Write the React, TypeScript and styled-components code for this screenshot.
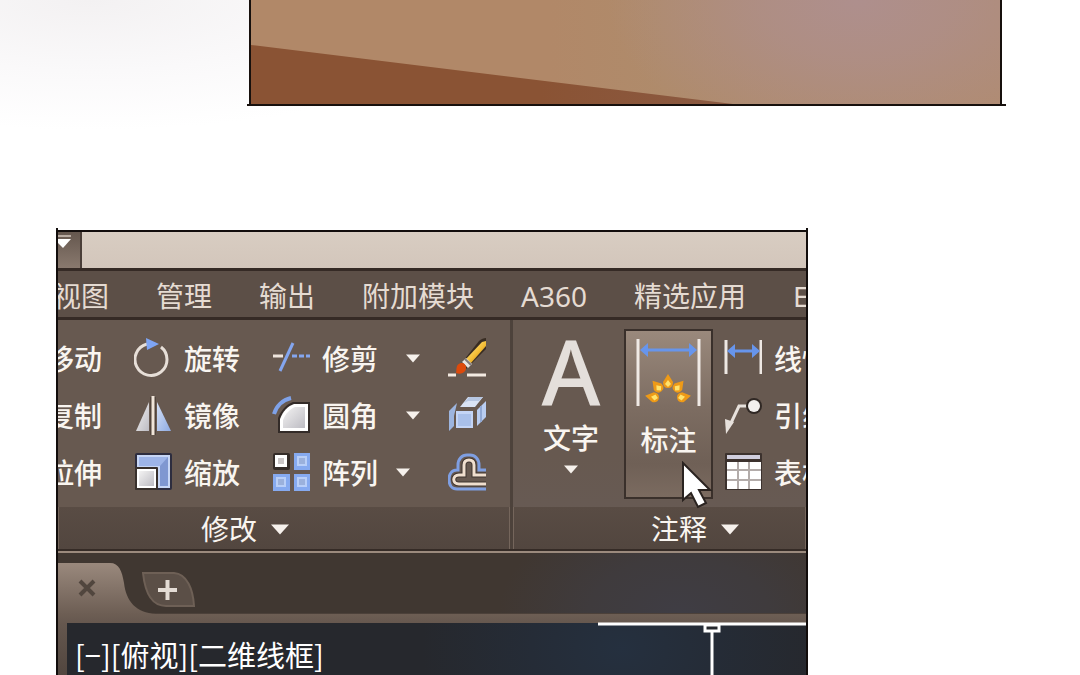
import React from "react";
import styled, { createGlobalStyle } from "styled-components";

const GlobalStyle = createGlobalStyle`
  * { box-sizing: border-box; }
  body { margin: 0; background: #fff; }
  button { margin: 0; padding: 0; border: 0; background: none; color: inherit; font: inherit; }
  svg { display: block; flex: none; }
`;

const Page = styled.main`
  display: flex;
  flex-direction: column;
  height: 100vh;
  overflow: hidden;
  color: #f9f5f0;
  font-family: "Noto Sans", "Noto Sans CJK SC", sans-serif;
  font-size: 28px;
  line-height: 42px;
  background: radial-gradient(ellipse 420px 130px at 90px 0, #f3f1f2, #faf9fa 55%, #fff) no-repeat;
`;

const TopRow = styled.div`
  display: grid;
  grid-template-columns: 249fr 753fr 78fr;
`;

const Illustration = styled.section`
  position: relative;
  grid-column: 2;
  height: 106px;
  border: solid #17100d;
  border-width: 0 2px 2px;
  background:
    radial-gradient(ellipse 250px 150px at 81% 0, #ae8f8d, rgba(174, 143, 141, 0.7) 40%, rgba(174, 142, 142, 0)),
    linear-gradient(90deg, #b18868 40%, #af8b6b 55%, #b08b70);

  &::after {
    content: "";
    position: absolute;
    left: -4px;
    right: -6px;
    bottom: -2px;
    height: 2px;
    background: #17100d;
  }

  svg { width: 100%; height: 100%; }
`;

const BottomRow = styled.div`
  display: grid;
  flex: 1;
  grid-template-columns: 56fr 752fr 272fr;
  min-height: 0;
  padding-top: 124px;
`;

const Window = styled.section`
  position: relative;
  grid-column: 2;
  display: flex;
  flex-direction: column;
  min-width: 0;
  border: solid #120d0c;
  border-width: 2px 2px 0;

  &::before, &::after {
    content: "";
    position: absolute;
    top: -4px;
    width: 2px;
    height: 4px;
    background: #120d0c;
  }
  &::before { left: -2px; }
  &::after { right: -2px; }
`;

const Clip = styled.div`
  display: flex;
  flex: 1;
  flex-direction: column;
  min-height: 0;
  overflow: hidden;
  background: #675950;
`;

const TitleBar = styled.header`
  display: flex;
  flex: none;
  height: 39px;
  border-bottom: 3px solid #352a25;
  background: linear-gradient(#d8cdc2, #d3c6bb);
`;

const QuickMenu = styled.button`
  display: flex;
  width: 24px;
  padding-top: 2px;
  border-right: 2px solid #4a3e38;
  background: linear-gradient(#65574e, #89796e);
`;

const TabBar = styled.nav`
  display: flex;
  flex: none;
  gap: 47px;
  height: 49px;
  padding-top: 4px;
  border-bottom: 3px solid #352a25;
  background: #5c4f47;
  color: #e5dbd2;
`;

const Tab = styled.button`
  flex: none;
  height: 42px;
  white-space: nowrap;
  &:first-child { margin-left: -5px; }
`;

const Ribbon = styled.div`
  display: flex;
  flex: none;
  height: 231px;
  border-bottom: 2px solid #352b26;
`;

const Panel = styled.section<{ $grow?: boolean }>`
  display: flex;
  flex-direction: column;
  flex: ${(p) => (p.$grow ? "1" : "0 0 455px")};
  min-width: 0;
  border-right: ${(p) => (p.$grow ? "0" : "3px solid #4d423b")};
  background: ${(p) => (p.$grow ? "linear-gradient(#675950 60%, #675b56)" : "#675950")};
`;

const PanelTitle = styled.button<{ $before?: number; $after?: number }>`
  display: flex;
  align-items: center;
  justify-content: center;
  gap: 14px;
  height: 42px;
  padding-top: 2px;
  padding-left: ${(p) => p.$before ?? 0}px;
  padding-right: ${(p) => p.$after ?? 0}px;
  border-right: 1px solid #75665c;
  border-left: 1px solid #75665c;
  background: linear-gradient(#594c44, #52463f);
`;

const ToolGrid = styled.div`
  display: grid;
  grid-template-columns: 44px 106px 144px 40px;
  grid-auto-rows: 57px;
  column-gap: 32px;
  height: 187px;
  padding-top: 10px;
  font-weight: 500;
`;

const Cell = styled.div<{ $gap?: number; $end?: boolean }>`
  display: flex;
  align-items: center;
  justify-content: ${(p) => (p.$end ? "flex-end" : "flex-start")};
  gap: ${(p) => p.$gap ?? 0}px;
`;

const Tool = styled.button`
  display: flex;
  flex: none;
  align-items: center;
  gap: 12px;
  white-space: nowrap;
`;

const AnnotateBody = styled.div`
  display: flex;
  height: 187px;
  padding-left: 29px;
  font-weight: 500;
`;

const TextTool = styled.button`
  display: flex;
  flex: none;
  flex-direction: column;
  align-items: center;
  gap: 6px;
  width: 58px;
  height: 170px;
  margin: 9px 24px 0 0;
  padding-top: 8px;
`;

const BigLetter = styled.span`
  height: 74px;
  color: #e4dfdb;
  font: 500 90px/68px "Noto Sans", sans-serif;
`;

const DimensionTool = styled(TextTool)`
  position: relative;
  width: 89px;
  margin-right: 11px;
  border: 2px solid #3a302b;
  background: linear-gradient(#9a897c, #7d6d62 45%, #6f6056 80%, #7b6b60);
`;

const Pointer = styled.svg`
  position: absolute;
  top: 130px;
  left: 55px;
`;

const ToolColumn = styled.div`
  display: grid;
  grid-auto-rows: 57px;
  padding-top: 10px;
`;

const DocTabs = styled.div`
  display: flex;
  flex: none;
  height: 63px;
  padding-top: 10px;
  border-top: 2px solid #9b8a7d;
  border-bottom: 1px solid #4c413a;
  background: radial-gradient(ellipse 180px 110px at 83% 100%, #3f3d44, #3f3b3d 50%, rgba(64, 55, 49, 0)), #403731;
`;

const DocTab = styled.button`
  width: 84px;
  height: 50px;
`;

const NewTab = styled.button`
  height: 36px;
  margin-top: 9px;
`;

const Workspace = styled.div`
  flex: 1;
  padding: 9px 0 0 9px;
  background: linear-gradient(#6d5e54, #65574e 10px, #51463f);
`;

const Drawing = styled.div`
  position: relative;
  height: 100%;
  padding: 10px 8px 0;
  background: radial-gradient(ellipse 200px 150px at 75% 50%, #25303f, #252c37 45%, rgba(38, 40, 45, 0)), #26282d;
  color: #fff;
  font-family: "Noto Sans CJK SC", sans-serif;
  font-size: 29px;
  white-space: nowrap;
`;

const Crosshair = styled.svg`
  position: absolute;
  top: -1px;
  right: 0;
`;

const Arrow = ({ size = 14 }: { size?: number }) => (
  <svg width={size} height={size === 14 ? 9 : 11} viewBox="0 0 14 9" preserveAspectRatio="none" aria-hidden>
    <path d="M0 .5h14L7 8.5z" fill="#f6f1ec" />
  </svg>
);

const Icon = ({ children }: { children: React.ReactNode }) => (
  <svg width="38" height="42" viewBox="0 0 38 42" aria-hidden>
    <defs>
      <linearGradient id="blue" x1="0" y1="0" x2="1" y2="1">
        <stop stopColor="#d4e0f6" /><stop offset="1" stopColor="#8eaae2" />
      </linearGradient>
      <linearGradient id="grey" x1="0" y1="0" x2="1" y2="1">
        <stop stopColor="#f4f3f3" /><stop offset="1" stopColor="#bdbcc3" />
      </linearGradient>
      <linearGradient id="gold" x1="0" y1="0" x2="1" y2="1">
        <stop stopColor="#fff3a5" /><stop offset=".55" stopColor="#f4bd35" /><stop offset="1" stopColor="#a36009" />
      </linearGradient>
    </defs>
    {children}
  </svg>
);

const RotateIcon = () => (
  <Icon>
    <path d="M27 9A16 16 0 1 1 13 6" fill="none" stroke="#e7dfd8" strokeWidth="3" />
    <path d="M12 0l13 6-12 6z" fill="#7ea5f5" />
  </Icon>
);
const MirrorIcon = () => (
  <Icon>
    <path d="M15 7v29H2z" fill="url(#grey)" />
    <path d="M23 7v29h14z" fill="url(#blue)" />
    <path d="M19 2v38" stroke="#51443c" strokeWidth="6" />
    <path d="M19 1v39" stroke="#efe4d9" strokeWidth="3" />
  </Icon>
);
const ScaleIcon = () => (
  <Icon>
    <rect x="1" y="1" width="37" height="37" rx="2" fill="#2d2d3f" />
    <rect x="3" y="3" width="33" height="33" fill="#c7d6f5" />
    <path d="M5 5h29v29h-8V14H5z" fill="#7f97d1" />
    <path d="M5 5h29l-8 9H5z" fill="#9db4e8" />
    <rect x="1" y="15" width="23" height="23" rx="1" fill="#38302c" />
    <rect x="3" y="17" width="19" height="19" fill="#fff" />
    <rect x="5" y="19" width="15" height="15" fill="url(#grey)" />
  </Icon>
);
const TrimIcon = () => (
  <Icon>
    <path d="M1 18h10" stroke="#eee5dd" strokeWidth="3" />
    <path d="M8 33L21 5" stroke="#84a6ef" strokeWidth="3" />
    <path d="M20 18h19" stroke="#84a6ef" strokeWidth="3" strokeDasharray="5 2" />
  </Icon>
);
const FilletIcon = () => (
  <Icon>
    <path d="M2 19A23 23 0 0 1 19 3" fill="none" stroke="#7fa2e8" strokeWidth="4" />
    <path d="M6 38V23C9 15 15 9 21 7h17v31z" fill="#332b28" />
    <path d="M8 36V24c3-8 8-13 14-15h14v27z" fill="#fff" />
    <path d="M11 33v-8c3-7 7-11 12-13h10v21z" fill="url(#grey)" />
  </Icon>
);
const ArrayIcon = () => (
  <Icon>
    <rect x="1" y="1" width="17" height="17" rx="2" fill="#342c28" />
    <rect x="3" y="3" width="12" height="12" fill="#fff" />
    <rect x="6" y="6" width="6" height="6" fill="#ccc8c8" />
    {[[22, 1], [1, 22], [22, 22]].map(([x, y]) => (
      <g key={`${x}-${y}`}>
        <rect x={x} y={y} width="17" height="17" fill="#86aaf0" />
        <rect x={x + 3} y={y + 3} width="10" height="10" fill="#b9cff8" />
        <rect x={x + 5} y={y + 5} width="6" height="6" fill="#9bb1dc" />
      </g>
    ))}
  </Icon>
);
const BrushIcon = () => (
  <Icon>
    <path d="M12 27L31 3c2-2 5-3 7-3v11L18 31z" fill="#382c22" />
    <path d="M18 21L34 4l4-1v5L23 25z" fill="url(#gold)" />
    <path d="M14 24l4-4 6 6-4 4z" fill="#e7e4e1" />
    <path d="M17 21l6 6" stroke="#817977" strokeWidth="2" />
    <path d="M8 35c1-2-1-9 5-10 5-1 7 6 3 9-2 2-5 2-8 1z" fill="#dd4a0c" />
    <path d="M0 37h8M19 37h19" stroke="#f3eae1" strokeWidth="3" />
  </Icon>
);
const ExplodeIcon = () => (
  <Icon>
    <path d="M1 16l8-8-3 13v10l-5 5z" fill="#9db5df" />
    <path d="M12 12L20 2h15l-8 10z" fill="#dae4f5" />
    <path d="M16 8l5-6h14l-4 4H20z" fill="#b7c7e2" />
    <path d="M29 15l9-9v16l-9 9z" fill="#b9cdf1" />
    <path d="M33 11v16" stroke="#91a9d5" strokeWidth="2" />
    <rect x="8" y="16" width="17" height="17" fill="#c4d5f6" />
    <rect x="10" y="19" width="13" height="12" fill="#a9c0ea" />
  </Icon>
);
const OffsetIcon = () => (
  <Icon>
    <path d="M38 18h-7v-5c0-6-4-10-9-10h-3c-5 0-9 4-9 10v5H9c-5 0-8 4-8 9.500S4 37 9 37h29" fill="none" stroke="#7f9fe2" strokeWidth="3" />
    <path d="M38 23H26V13c0-4-2-5-5-5s-5 1-5 5v10h-5c-7 0-7 9 0 9h27" fill="none" stroke="#3f342f" strokeWidth="5" />
    <path d="M38 23H26V13c0-4-2-5-5-5s-5 1-5 5v10h-5c-7 0-7 9 0 9h27" fill="none" stroke="#f0dfcf" strokeWidth="3" />
  </Icon>
);
const LinearIcon = () => (
  <Icon>
    <path d="M2 2v34M37 2v34" stroke="#eee8e3" strokeWidth="3" />
    <path d="M8 13h24" stroke="#6795ec" strokeWidth="3" />
    <path d="M3 13l8-7v14zM36 13l-8-7v14z" fill="#6795ec" />
  </Icon>
);
const LeaderIcon = () => (
  <Icon>
    <path d="M28 11H15L7 28" fill="none" stroke="#e7e1dc" strokeWidth="3" />
    <path d="M1 24l9 3-8 12z" fill="#e7e1dc" />
    <circle cx="30" cy="11" r="8" fill="#302824" />
    <circle cx="30" cy="11" r="6" fill="#f2efed" />
  </Icon>
);
const TableIcon = () => (
  <Icon>
    <rect x="1" y="1" width="37" height="37" rx="1" fill="#3c322e" />
    <rect x="3" y="3" width="33" height="4" fill="#d0cede" />
    <rect x="3" y="10" width="34" height="27" fill="#fff" />
    <path d="M14 10v27M25 10v27M3 18h34M3 28h34" stroke="#b3acaa" strokeWidth="2" />
  </Icon>
);

const DimensionIcon = () => (
  <svg width="65" height="74" viewBox="0 0 65 74" aria-hidden>
    <path d="M2 0v67M63 0v67" stroke="#f0eae5" strokeWidth="3" />
    <path d="M8 11h48" stroke="#6795ec" strokeWidth="3" />
    <path d="M4 11l8-7v14zM61 11l-8-7v14z" fill="#6795ec" />
    {[[16, 58, -80], [21, 47, -40], [32, 42, 0], [43, 47, 40], [48, 58, 80]].map(([x, y, angle]) => (
      <g key={x} transform={`translate(${x} ${y}) rotate(${angle})`}>
        <path d="M0-7L5 1Q5 7 0 7Q-5 7-5 1z" fill="#ee9a17" />
        <path d="M0-1L3 3 0 6-3 3z" fill="#ffe36d" />
      </g>
    ))}
  </svg>
);

const rows = [
  { left: "移动", mid: "旋转", midIcon: <RotateIcon />, right: "修剪", rightIcon: <TrimIcon />, gap: 28, extra: "删除", extraIcon: <BrushIcon /> },
  { left: "复制", mid: "镜像", midIcon: <MirrorIcon />, right: "圆角", rightIcon: <FilletIcon />, gap: 28, extra: "分解", extraIcon: <ExplodeIcon /> },
  { left: "拉伸", mid: "缩放", midIcon: <ScaleIcon />, right: "阵列", rightIcon: <ArrayIcon />, gap: 18, extra: "偏移", extraIcon: <OffsetIcon /> },
];

export default function App() {
  return (
    <Page>
      <GlobalStyle />
      <TopRow>
        <Illustration>
          <svg viewBox="0 0 749 104" preserveAspectRatio="none" aria-hidden>
            <defs>
              <linearGradient id="floor">
                <stop offset=".6" stopColor="#8a5334" /><stop offset="1" stopColor="#8b5a42" />
              </linearGradient>
            </defs>
            <path d="M0 45L482 104H0z" fill="url(#floor)" />
          </svg>
        </Illustration>
      </TopRow>
      <BottomRow>
        <Window>
          <Clip>
            <TitleBar>
              <QuickMenu aria-label="快速访问">
                <svg width="22" height="30" viewBox="0 0 22 30" aria-hidden>
                  <path d="M0 2h13" stroke="#b9aca2" strokeWidth="2" />
                  <path d="M0 5h13L5 14 0 9z" fill="#fff" />
                </svg>
              </QuickMenu>
            </TitleBar>
            <TabBar>
              {["视图", "管理", "输出", "附加模块", "A360", "精选应用", "E"].map((t) => <Tab key={t}>{t}</Tab>)}
            </TabBar>
            <Ribbon>
              <Panel>
                <ToolGrid>
                  {rows.map((r) => (
                    <React.Fragment key={r.left}>
                      <Cell $end><Tool>{r.left}</Tool></Cell>
                      <Cell><Tool>{r.midIcon}{r.mid}</Tool></Cell>
                      <Cell $gap={r.gap}>
                        <Tool>{r.rightIcon}{r.right}</Tool>
                        <Tool aria-label={`${r.right}选项`}><Arrow /></Tool>
                      </Cell>
                      <Cell><Tool aria-label={r.extra}>{r.extraIcon}</Tool></Cell>
                    </React.Fragment>
                  ))}
                </ToolGrid>
                <PanelTitle $after={78}>修改<Arrow size={18} /></PanelTitle>
              </Panel>
              <Panel $grow>
                <AnnotateBody>
                  <TextTool>
                    <BigLetter aria-hidden>A</BigLetter>
                    <span>文字</span>
                    <Arrow />
                  </TextTool>
                  <DimensionTool>
                    <DimensionIcon />
                    <span>标注</span>
                    <Pointer width="32" height="50" viewBox="0 0 32 50" aria-hidden>
                      <path d="M2 2v37l8-7 7 14 8-4-7-13h11z" fill="#fff" stroke="#2a2320" strokeWidth="2" />
                    </Pointer>
                  </DimensionTool>
                  <ToolColumn>
                    <Tool><LinearIcon />线性</Tool>
                    <Tool><LeaderIcon />引线</Tool>
                    <Tool><TableIcon />表格</Tool>
                  </ToolColumn>
                </AnnotateBody>
                <PanelTitle $before={71}>注释<Arrow size={18} /></PanelTitle>
              </Panel>
            </Ribbon>
            <DocTabs>
              <DocTab aria-label="关闭">
                <svg width="100" height="51" viewBox="0 0 100 51" aria-hidden>
                  <defs>
                    <linearGradient id="tab" x2="0" y2="1">
                      <stop stopColor="#9a897d" /><stop offset="1" stopColor="#6d5e54" />
                    </linearGradient>
                  </defs>
                  <path d="M0 0H52C61 0 64 8 66 20C68 38 78 50 98 51H0z" fill="url(#tab)" />
                  <path d="M22 18l14 14M36 18l-14 14" stroke="#51463e" strokeWidth="4" />
                </svg>
              </DocTab>
              <NewTab aria-label="新建">
                <svg width="53" height="36" viewBox="0 0 53 36" aria-hidden>
                  <path d="M1 1H32C45 2 51 17 52 34H24C10 34 3 20 1 1z" fill="#5b4f47" stroke="#6e6056" strokeWidth="2" />
                  <path d="M16 18h19M25.500 8v20" stroke="#e4dcd5" strokeWidth="4" />
                </svg>
              </NewTab>
            </DocTabs>
            <Workspace>
              <Drawing>
                [−][俯视][二维线框]
                <Crosshair width="208" height="56" viewBox="0 0 208 56" aria-hidden>
                  <path d="M0 2h208" stroke="#fff" strokeWidth="3" />
                  <rect x="107" y="3" width="14" height="6" fill="#26282d" stroke="#fff" strokeWidth="3" />
                  <path d="M114 10v46" stroke="#fff" strokeWidth="3" />
                </Crosshair>
              </Drawing>
            </Workspace>
          </Clip>
        </Window>
      </BottomRow>
    </Page>
  );
}
